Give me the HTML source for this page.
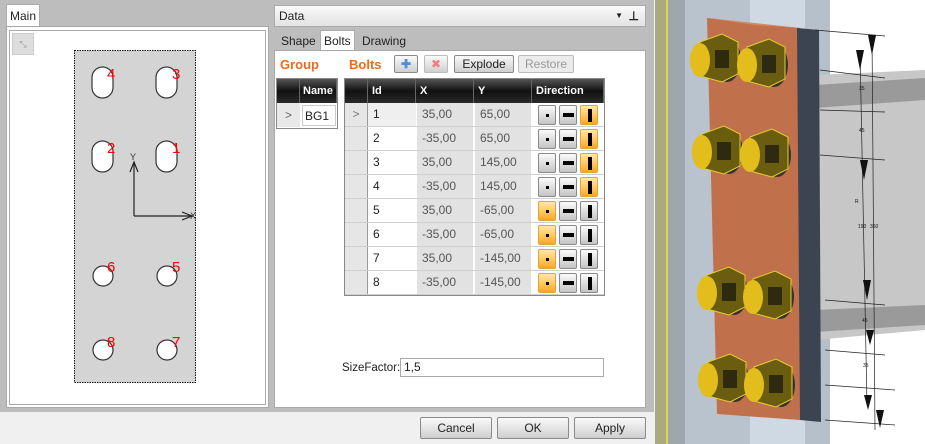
<!DOCTYPE html><html><head><meta charset="utf-8"><style>
*{box-sizing:border-box}body{margin:0;width:925px;height:444px;overflow:hidden;background:#f0f0f0;font-family:"Liberation Sans",sans-serif;font-size:12px;color:#222;position:relative}
.a{position:absolute}
.btn{position:absolute;border:1px solid #8a8a8a;border-radius:2px;background:linear-gradient(#fafafa,#e4e4e4 50%,#cfcfcf);text-align:center;font-size:12px;line-height:20px}
.hd{background:linear-gradient(#555,#111 50%,#2a2a2a);color:#fff;font-weight:bold;font-size:11px;line-height:24px;padding-left:4px;border-right:1px solid #666;overflow:hidden}
.cell{position:absolute;height:23px;line-height:23px;padding-left:5px;font-size:12px}
.db{position:absolute;width:18px;height:20px;border:1px solid #888;border-radius:2px;background:linear-gradient(#fafafa,#ddd 55%,#c4c4c4)}
.db.on{border-color:#e6a33a;background:linear-gradient(#ffe9b0,#ffc65c 55%,#ffa52a)}
</style></head><body>
<div class="a" style="left:0;top:0;width:654px;height:412px;background:#bdbdbd"></div>
<div class="a" style="left:6px;top:4px;width:34px;height:24px;background:#fff;border:1px solid #aaa;border-bottom:none;font-size:12px;line-height:22px;padding-left:3px">Main</div>
<div class="a" style="left:6px;top:26px;width:263px;height:382px;background:#fff;border:1px solid #a8a8a8"></div>
<div class="a" style="left:9px;top:30px;width:257px;height:375px;border:1px solid #aaa"></div>
<div class="a" style="left:12px;top:33px;width:22px;height:22px;background:#ddd;border:1px solid #ccc;color:#999;font-size:9px;text-align:center;line-height:20px">⤡</div>
<svg class="a" style="left:0;top:0" width="270" height="410">
<rect x="74.5" y="50.5" width="121" height="332" fill="#d4d4d4" stroke="#111" stroke-dasharray="1.5 1"/>
<g fill="#fff" stroke="#333" stroke-width="1.2">
<rect x="92" y="67" width="21" height="31" rx="10.5"/><rect x="156" y="67" width="21" height="31" rx="10.5"/>
<rect x="92" y="141" width="21" height="31" rx="10.5"/><rect x="156" y="141" width="21" height="31" rx="10.5"/>
<circle cx="103" cy="276" r="10"/><circle cx="167" cy="276" r="10"/><circle cx="103" cy="350" r="10"/><circle cx="167" cy="350" r="10"/></g>
<g fill="#f00" font-size="15" font-family="Liberation Sans"><text x="107" y="79">4</text><text x="172" y="79">3</text><text x="107" y="153">2</text><text x="172" y="153">1</text><text x="107" y="272">6</text><text x="172" y="272">5</text><text x="107" y="347">8</text><text x="172" y="347">7</text></g>
<g stroke="#222" fill="none" stroke-width="1.2"><path d="M134 216V162M130 172L134 162L138 172M134 216H192M182 212L192 216L182 220"/></g>
<text x="130" y="160" font-size="9" fill="#333">Y</text><text x="190" y="219" font-size="9" fill="#333">X</text>
</svg>
<div class="a" style="left:274px;top:5px;width:372px;height:22px;background:linear-gradient(#fafafa,#e2e2e2);border:1px solid #aaa;padding-left:4px;line-height:20px">Data<span style="position:absolute;right:22px;font-size:8px">▼</span><span style="position:absolute;right:6px;font-weight:bold">⊥</span></div>
<div class="a" style="left:281px;top:34px;font-size:12px">Shape</div>
<div class="a" style="left:320px;top:30px;width:35px;height:21px;background:#fff;border:1px solid #aaa;border-bottom:none;padding-left:3px;line-height:20px">Bolts</div>
<div class="a" style="left:362px;top:34px">Drawing</div>
<div class="a" style="left:274px;top:50px;width:372px;height:358px;background:#fff;border:1px solid #a8a8a8"></div>
<div class="a" style="left:280px;top:57px;color:#f06a1c;font-weight:bold;font-size:13px">Group</div>
<div class="a" style="left:349px;top:57px;color:#f06a1c;font-weight:bold;font-size:13px">Bolts</div>
<div class="btn" style="left:394px;top:55px;width:24px;height:18px;color:#4a8fd8;font-weight:bold;line-height:16px">✚</div>
<div class="btn" style="left:424px;top:55px;width:24px;height:18px;color:#f08080;line-height:16px;border-color:#bbb">✖</div>
<div class="btn" style="left:454px;top:55px;width:60px;height:18px;line-height:16px">Explode</div>
<div class="btn" style="left:518px;top:55px;width:56px;height:18px;line-height:16px;color:#999;border-color:#bbb;background:#ececec">Restore</div>
<div class="a" style="left:276px;top:78px;width:62px;height:51px;border:1px solid #888;background:#fff"></div>
<div class="a hd" style="left:277px;top:79px;width:23px;height:24px"></div>
<div class="a hd" style="left:300px;top:79px;width:37px;height:24px;padding-left:3px">Name</div>
<div class="a" style="left:277px;top:103px;width:23px;height:24px;background:#e8e8e8;color:#666;line-height:24px;text-align:center">&gt;</div>
<div class="a" style="left:302px;top:105px;width:34px;height:21px;border:1px solid #ccc;line-height:20px;padding-left:2px">BG1</div>
<div class="a" style="left:344px;top:78px;width:261px;height:218px;border:1px solid #888;background:#fff"></div>
<div class="a hd" style="left:345px;top:79px;width:23px;height:24px"></div>
<div class="a hd" style="left:368px;top:79px;width:48px;height:24px">Id</div>
<div class="a hd" style="left:416px;top:79px;width:58px;height:24px">X</div>
<div class="a hd" style="left:474px;top:79px;width:58px;height:24px">Y</div>
<div class="a hd" style="left:532px;top:79px;width:72px;height:24px">Direction</div>
<div id="rows"></div>
<script>
var d=[[1,"35,00","65,00",2],[2,"-35,00","65,00",2],[3,"35,00","145,00",2],[4,"-35,00","145,00",2],[5,"35,00","-65,00",0],[6,"-35,00","-65,00",0],[7,"35,00","-145,00",0],[8,"-35,00","-145,00",0]];
var h="";d.forEach(function(r,i){var y=103+i*24;
h+='<div class="a" style="left:345px;top:'+y+'px;width:23px;height:23px;background:#e6e6e6;border-right:1px solid #999;color:#777;text-align:center;line-height:23px">'+(i==0?'&gt;':'')+'</div>';
h+='<div class="cell" style="left:368px;top:'+y+'px;width:48px;background:'+(i==0?'#efefef':'#fff')+'">'+r[0]+'</div>';
h+='<div class="cell" style="left:417px;top:'+y+'px;width:56px;background:#e2e2e2;color:#555">'+r[1]+'</div>';
h+='<div class="cell" style="left:475px;top:'+y+'px;width:56px;background:#e2e2e2;color:#555">'+r[2]+'</div>';
h+='<div class="a" style="left:345px;top:'+(y+23)+'px;width:259px;height:1px;background:#d0d0d0"></div>';
var ic=['<div class="a" style="left:7px;top:8px;width:3px;height:3px;background:#000"></div>','<div class="a" style="left:3px;top:7px;width:11px;height:4px;background:#000"></div>','<div class="a" style="left:7px;top:3px;width:4px;height:13px;background:#000"></div>'];
for(var k=0;k<3;k++)h+='<div class="db'+(r[3]==k?' on':'')+'" style="left:'+(538+k*21)+'px;top:'+(y+2)+'px">'+ic[k]+'</div>';});
document.getElementById('rows').innerHTML=h;
</script>
<div class="a" style="left:342px;top:362px;font-size:11.5px">SizeFactor:</div>
<div class="a" style="left:400px;top:358px;width:204px;height:19px;border:1px solid #aaa;background:#fff;padding-left:3px;line-height:17px">1,5</div>
<div class="btn" style="left:420px;top:417px;width:72px;height:22px">Cancel</div>
<div class="btn" style="left:497px;top:417px;width:72px;height:22px">OK</div>
<div class="btn" style="left:574px;top:417px;width:72px;height:22px">Apply</div>
<svg class="a" style="left:655px;top:0" width="270" height="444">
<rect width="270" height="444" fill="#fff"/>
<rect x="0" width="13" height="444" fill="#a9a982"/><rect x="11" width="2" height="444" fill="#e0d840"/>
<rect x="13" width="17" height="444" fill="#9ea6ae"/><rect x="30" width="65" height="444" fill="#b9c3ce"/>
<rect x="95" width="70" height="444" fill="#cfd9e3"/><rect x="150" width="25" height="444" fill="#b6c0ca"/>
<path d="M160 75L270 70V330L160 340Z" fill="#c7c7c7"/><path d="M160 85L270 78V100L160 108Z" fill="#9a9a9a"/><path d="M160 310L270 305V325L160 332Z" fill="#9a9a9a"/>
<path d="M52 18L145 28L145 420L62 414Z" fill="#c0714c"/><path d="M52 18L145 28L100 25Z" fill="#d88a62"/>
<path d="M142 28L164 30L166 422L145 420Z" fill="#3b4450"/>
<g stroke="#222" fill="none" stroke-width=".7"><path d="M217 35L220 430M205 50L212 405"/><path d="M160 30L230 36M165 70L230 78M165 110L230 112M165 155L230 160M170 300L230 305M170 350L230 355M170 385L240 390M170 420L240 425"/></g>
<g fill="#111"><path d="M213 35l4 20 4-20zM201 50l4 20 4-20zM205 160l4 20 4-20zM208 280l4 20 4-20zM211 330l4 15 4-15zM209 395l4 15 4-15zM221 410l4 18 4-18z"/></g>
<g font-size="5" fill="#111"><text x="204" y="90">35</text><text x="204" y="132">45</text><text x="200" y="203">R</text><text x="203" y="228">190</text><text x="215" y="228">360</text><text x="207" y="322">45</text><text x="208" y="367">35</text></g>
<g id="b"></g>
</svg>
<script>
var s="",P=[[50,60],[97,65],[52,152],[100,155],[57,293],[103,297],[58,380],[104,385]];
P.forEach(function(p){var x=p[0],y=p[1];
s+='<ellipse cx="'+(x+22)+'" cy="'+y+'" rx="14" ry="22" fill="#333"/>';
s+='<path d="M'+(x-5)+' '+(y-18)+'l22-8 16 8v32l-16 8-22-6z" fill="#6a5d10" stroke="#e6cf2a" stroke-width="1"/>';
s+='<rect x="'+(x+10)+'" y="'+(y-10)+'" width="14" height="18" fill="#2d2a10"/>';
s+='<ellipse cx="'+(x-5)+'" cy="'+y+'" rx="10" ry="17" fill="#e2bd1c"/>';});
document.getElementById('b').innerHTML=s;
</script>
</body></html>
